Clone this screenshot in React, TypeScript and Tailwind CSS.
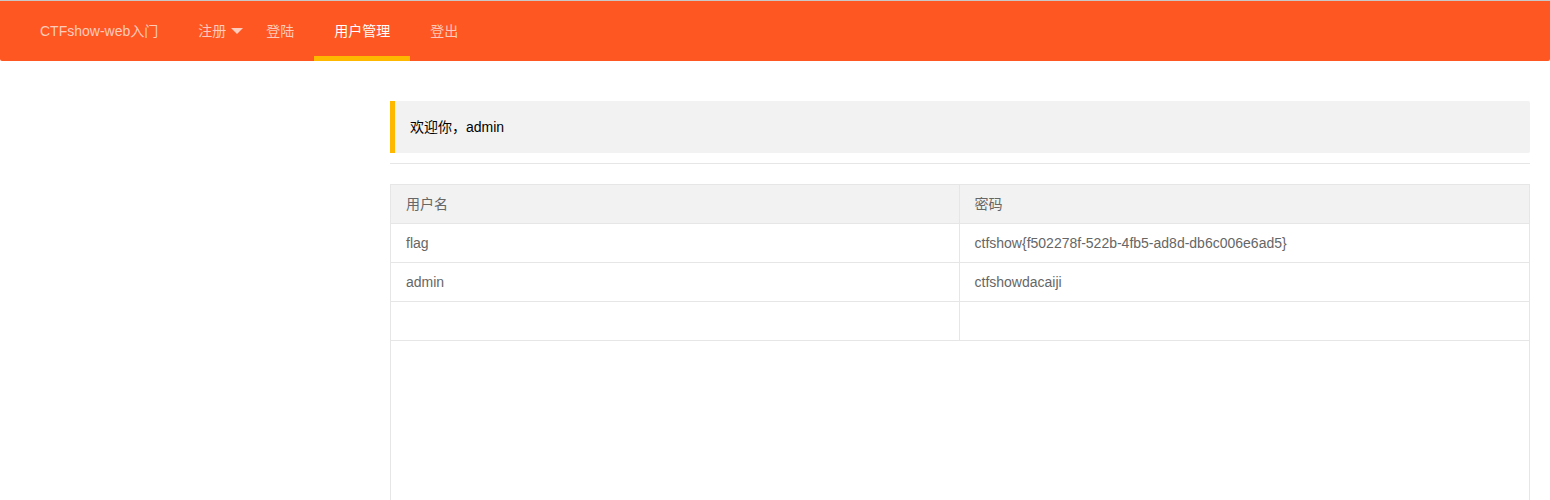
import React from "react";

const font = { fontFamily: '"Liberation Sans", "Noto Sans CJK SC", sans-serif' };

export default function App() {
  return (
    <div className="min-h-[500px] bg-white text-[14px]" style={font}>
      <div className="border-t border-[#c8c8c8]">
        <div className="flex h-[60px] items-stretch rounded-b-[2px] bg-[#FF5722] pl-[40px] text-white/70">
          <div className="flex items-center leading-[60px]">CTFshow-web入门</div>
          <div className="ml-[20px] flex">
            <div className="relative flex items-center px-[20px]">
              <span>注册</span>
              <span className="absolute right-[3px] top-[27px] h-0 w-0 border-x-[6px] border-t-[6px] border-x-transparent border-t-white/70" />
            </div>
            <div className="flex items-center px-[20px]">登陆</div>
            <div className="relative flex items-center px-[20px] text-white">
              用户管理
              <span className="absolute bottom-0 left-0 h-[5px] w-full bg-[#FFB800]" />
            </div>
            <div className="flex items-center px-[20px]">登出</div>
          </div>
        </div>
      </div>

      <div className="ml-[390px] mr-[20px] pt-[40px]">
        <div className="rounded-r-[2px] border-l-[5px] border-[#FFB800] bg-[#f2f2f2] px-[15px] py-[15px] leading-[22px] text-[#000]">
          欢迎你，admin
        </div>
        <div className="mt-[10px] h-px bg-[#e6e6e6]" />
        <div className="mt-[20px] h-[316px] border-x border-t border-[#e6e6e6]">
          <table className="w-full border-collapse text-[#666]">
            <colgroup>
              <col className="w-[568px]" />
              <col />
            </colgroup>
            <thead>
              <tr className="bg-[#f2f2f2]">
                <th className="border-b border-r border-[#e6e6e6] px-[15px] py-[9px] text-left font-normal leading-[20px]">用户名</th>
                <th className="border-b border-[#e6e6e6] px-[15px] py-[9px] text-left font-normal leading-[20px]">密码</th>
              </tr>
            </thead>
            <tbody>
              <tr>
                <td className="border-b border-r border-[#e6e6e6] px-[15px] py-[9px] leading-[20px]">flag</td>
                <td className="border-b border-[#e6e6e6] px-[15px] py-[9px] leading-[20px]">ctfshow{"{"}f502278f-522b-4fb5-ad8d-db6c006e6ad5{"}"}</td>
              </tr>
              <tr>
                <td className="border-b border-r border-[#e6e6e6] px-[15px] py-[9px] leading-[20px]">admin</td>
                <td className="border-b border-[#e6e6e6] px-[15px] py-[9px] leading-[20px]">ctfshowdacaiji</td>
              </tr>
              <tr>
                <td className="h-[39px] border-b border-r border-[#e6e6e6] px-[15px] py-[9px] leading-[20px]"></td>
                <td className="h-[39px] border-b border-[#e6e6e6] px-[15px] py-[9px] leading-[20px]"></td>
              </tr>
            </tbody>
          </table>
        </div>
      </div>
    </div>
  );
}
